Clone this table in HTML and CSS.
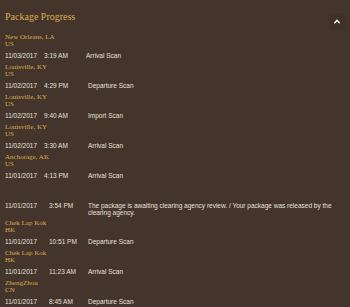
FILE: index.html
```html
<!DOCTYPE html>
<html lang="en">
<head>
<meta charset="utf-8">
<title>Package Progress</title>
<link rel="stylesheet" href="styles.css">
</head>
<body>
<div class="panel">
  <div class="header">
    <h2 class="title">Package Progress</h2>
    <button class="toggle" aria-label="Collapse">
      <svg width="16" height="16" viewBox="0 0 16 16"><path d="M5.4 10.3 L8 7.4 L10.6 10.3" fill="none" stroke="#ffffff" stroke-width="1.4"/></svg>
    </button>
  </div>
  <div class="groups">
    <div class="group">
      <div class="loc"><div class="line">New Orleans, LA</div><div class="line">US</div></div>
      <div class="row row-a"><span class="date">11/03/2017</span><span class="time">3:19 AM</span><span class="desc">Arrival Scan</span></div>
    </div>
    <div class="group">
      <div class="loc"><div class="line">Louisville, KY</div><div class="line">US</div></div>
      <div class="row"><span class="date">11/02/2017</span><span class="time">4:29 PM</span><span class="desc">Departure Scan</span></div>
    </div>
    <div class="group">
      <div class="loc"><div class="line">Louisville, KY</div><div class="line">US</div></div>
      <div class="row"><span class="date">11/02/2017</span><span class="time">9:40 AM</span><span class="desc">Import Scan</span></div>
    </div>
    <div class="group">
      <div class="loc"><div class="line">Louisville, KY</div><div class="line">US</div></div>
      <div class="row"><span class="date">11/02/2017</span><span class="time">3:30 AM</span><span class="desc">Arrival Scan</span></div>
    </div>
    <div class="group">
      <div class="loc"><div class="line">Anchorage, AK</div><div class="line">US</div></div>
      <div class="row"><span class="date">11/01/2017</span><span class="time">4:13 PM</span><span class="desc">Arrival Scan</span></div>
    </div>
    <div class="group group-long">
      <div class="loc"><div class="line"></div><div class="line"></div></div>
      <div class="row row-wide"><span class="date">11/01/2017</span><span class="time">3:54 PM</span><span class="desc desc-long">The package is awaiting clearing agency review. / Your package was released by the clearing agency.</span></div>
    </div>
    <div class="group">
      <div class="loc"><div class="line">Chek Lap Kok</div><div class="line">HK</div></div>
      <div class="row row-wide"><span class="date">11/01/2017</span><span class="time">10:51 PM</span><span class="desc">Departure Scan</span></div>
    </div>
    <div class="group">
      <div class="loc"><div class="line">Chek Lap Kok</div><div class="line">HK</div></div>
      <div class="row row-wide"><span class="date">11/01/2017</span><span class="time">11:23 AM</span><span class="desc">Arrival Scan</span></div>
    </div>
    <div class="group">
      <div class="loc"><div class="line">ZhengZhou</div><div class="line">CN</div></div>
      <div class="row row-wide"><span class="date">11/01/2017</span><span class="time">8:45 AM</span><span class="desc">Departure Scan</span></div>
    </div>
  </div>
</div>
</body>
</html>
```
FILE: styles.css
```css
html, body {
  margin: 0;
  background: #43352c;
}

body {
  font-family: "Liberation Sans", Arial, sans-serif;
  color: #e6e0d9;
  overflow: hidden;
}

.panel {
  padding: 11px 5px 0 5px;
}

.header {
  display: flex;
  align-items: flex-start;
  justify-content: space-between;
}

.title {
  margin: 0;
  font-family: "Liberation Serif", "Times New Roman", serif;
  font-weight: normal;
  font-size: 10px;
  line-height: 12px;
  color: #dcaa4c;
}

.toggle {
  width: 16px;
  height: 16px;
  margin: 2px 0 -6px 0;
  padding: 0;
  border: 0;
  border-radius: 2px;
  background: rgba(0, 0, 0, 0.07);
  display: flex;
  align-items: center;
  justify-content: center;
}

.toggle svg {
  display: block;
}

.groups {
  display: flex;
  flex-direction: column;
  gap: 5.5px;
  padding-top: 11px;
}

.group {
  display: flex;
  flex-direction: column;
}

.group-long {
  margin-bottom: -1px;
}

.loc {
  font-family: "Liberation Serif", "Times New Roman", serif;
  font-size: 7px;
  color: #dcaa4c;
}

.line {
  height: 7px;
  line-height: 7px;
  white-space: nowrap;
}

.row {
  display: flex;
  align-items: flex-start;
  margin-top: 3.5px;
  font-size: 6.5px;
  line-height: 7px;
}

.date {
  flex: 0 0 39px;
}

.time {
  flex: 0 0 44px;
  white-space: nowrap;
}

.row-a .time {
  flex-basis: 42px;
}

.row-wide .date {
  flex-basis: 44px;
}

.row-wide .time {
  flex-basis: 39px;
}

.desc {
  flex: 1 1 auto;
  min-width: 0;
}

.desc-long {
  padding-right: 8px;
}
```
